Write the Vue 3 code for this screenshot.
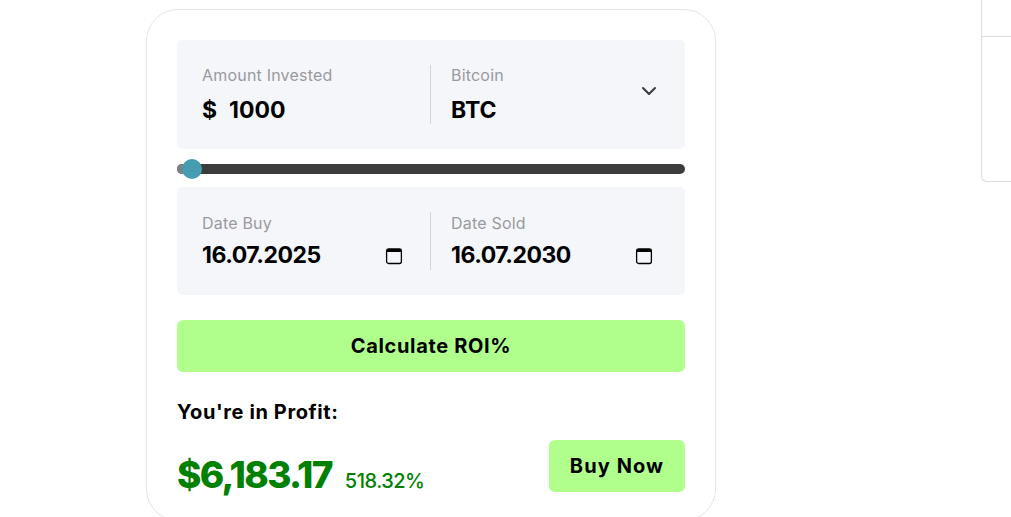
<template>
  <div class="page">
    <main class="card">
      <!-- Amount and coin -->
      <section class="panel panel-amount">
        <div class="field">
          <span class="label">Amount Invested</span>
          <div class="value"><span class="currency">$</span>{{ amount }}</div>
        </div>
        <div class="field field-right">
          <span class="label">Bitcoin</span>
          <div class="value">BTC</div>
          <svg class="chevron" width="16" height="10" viewBox="0 0 16 10" fill="none" stroke="#343a40" stroke-width="2" stroke-linecap="round" stroke-linejoin="round">
            <path d="M2 2l6 6 6-6"></path>
          </svg>
        </div>
      </section>

      <!-- Amount slider -->
      <div class="slider">
        <div class="slider-start"></div>
        <div class="slider-thumb"></div>
      </div>

      <!-- Dates -->
      <section class="panel panel-dates">
        <div v-for="(item, i) in dates" :key="item.label" class="field" :class="{ 'field-right': i === 1 }">
          <span class="label">{{ item.label }}</span>
          <div class="value value-date">
            <span>{{ item.value }}</span>
            <svg class="calendar" width="18" height="18" viewBox="0 0 18 18" fill="none">
              <rect x="1.6" y="1.9" width="14.8" height="14.6" rx="2" stroke="#000" stroke-width="1.3"></rect>
              <path d="M1.6 3.9a2 2 0 0 1 2-2h10.8a2 2 0 0 1 2 2v1H1.6z" fill="#000"></path>
            </svg>
          </div>
        </div>
      </section>

      <button class="btn btn-wide" type="button">Calculate ROI%</button>

      <h3 class="result-title">You're in Profit:</h3>
      <div class="result">
        <div class="result-values">
          <span class="profit">{{ profit }}</span>
          <span class="percent">{{ percent }}</span>
        </div>
        <button class="btn btn-buy" type="button">Buy Now</button>
      </div>
    </main>

    <aside class="side">
      <div class="side-row"></div>
    </aside>
  </div>
</template>

<script setup>
const amount = 1000
const profit = '$6,183.17'
const percent = '518.32%'

const dates = [
  { label: 'Date Buy', value: '16.07.2025' },
  { label: 'Date Sold', value: '16.07.2030' },
]
</script>

<style scoped>
.page {
  display: flex;
  align-items: flex-start;
  height: 517px;
  padding-left: 146px;
  box-sizing: border-box;
  overflow: hidden;
  background: #fff;
  font-family: Inter, "Liberation Sans", sans-serif;
  color: #000;
}

.card {
  flex: 0 0 570px;
  box-sizing: border-box;
  height: 512px;
  margin-top: 9px;
  padding: 30px 30px 0;
  background: #fff;
  border: 1px solid #e4e4e4;
  border-radius: 32px;
}

.panel {
  display: flex;
  padding: 25px 0;
  box-sizing: border-box;
  background: #f4f6fa;
  border-radius: 5px;
}

.panel-amount {
  height: 109px;
}

.panel-dates {
  height: 108px;
}

.panel-dates .field {
  padding-top: 1px;
}

.field {
  position: relative;
  flex: 0 0 253px;
  box-sizing: border-box;
  padding-left: 25px;
}

.field-right {
  flex: 1;
  padding-left: 20px;
  border-left: 1px solid #d4d4d4;
}

.label {
  display: block;
  margin-top: -1px;
  font-size: 16px;
  line-height: 22px;
  letter-spacing: 0.2px;
  color: #9a9a9e;
}

.value {
  margin-top: 9px;
  font-size: 23px;
  line-height: 30px;
  font-weight: 700;
}

.currency {
  margin-right: 12px;
}

.value-date {
  display: flex;
  justify-content: space-between;
  align-items: center;
  margin-top: 6px;
  padding-right: 27px;
  letter-spacing: -0.5px;
}

.field-right .value-date {
  padding-right: 32px;
}

.chevron {
  position: absolute;
  top: 21px;
  right: 28px;
}

.calendar {
  margin-top: 1px;
}

.slider {
  position: relative;
  height: 10px;
  margin: 15px 0 13px;
  background: #3c3c3c;
  border-radius: 5px;
}

.slider-start {
  width: 16px;
  height: 10px;
  background: #7d8184;
  border-radius: 5px 0 0 5px;
}

.slider-thumb {
  position: absolute;
  top: -5px;
  left: 5px;
  width: 20px;
  height: 20px;
  background: #469cb0;
  border-radius: 50%;
}

.btn {
  display: block;
  border: 0;
  border-radius: 6px;
  background: #b0ff8c;
  color: #000;
  font-family: inherit;
  font-weight: 700;
  font-size: 20px;
}

.btn-wide {
  width: 100%;
  height: 52px;
  margin-top: 25px;
  letter-spacing: 0.65px;
}

.result-title {
  margin: 28px 0 0;
  font-size: 20px;
  line-height: 24px;
  font-weight: 700;
  letter-spacing: 0.6px;
}

.result {
  display: flex;
  justify-content: space-between;
  align-items: flex-start;
  margin-top: 16px;
}

.result-values {
  display: flex;
  align-items: baseline;
  gap: 13px;
  margin-top: 12px;
  color: #008000;
}

.profit {
  font-size: 37px;
  font-weight: 800;
  letter-spacing: -1.65px;
}

.percent {
  font-size: 20px;
  font-weight: 500;
  letter-spacing: -0.5px;
}

.btn-buy {
  width: 136px;
  height: 52px;
  letter-spacing: 1.1px;
}

.side {
  flex: 0 0 100px;
  box-sizing: border-box;
  height: 182px;
  margin-left: 265px;
  border-left: 1px solid #dcdcdc;
  border-bottom: 1px solid #dcdcdc;
  border-bottom-left-radius: 6px;
}

.side-row {
  height: 37px;
  box-sizing: border-box;
  border-bottom: 1px solid #dcdcdc;
}
</style>

<style>
html,
body {
  margin: 0;
  overflow: hidden;
}
</style>
